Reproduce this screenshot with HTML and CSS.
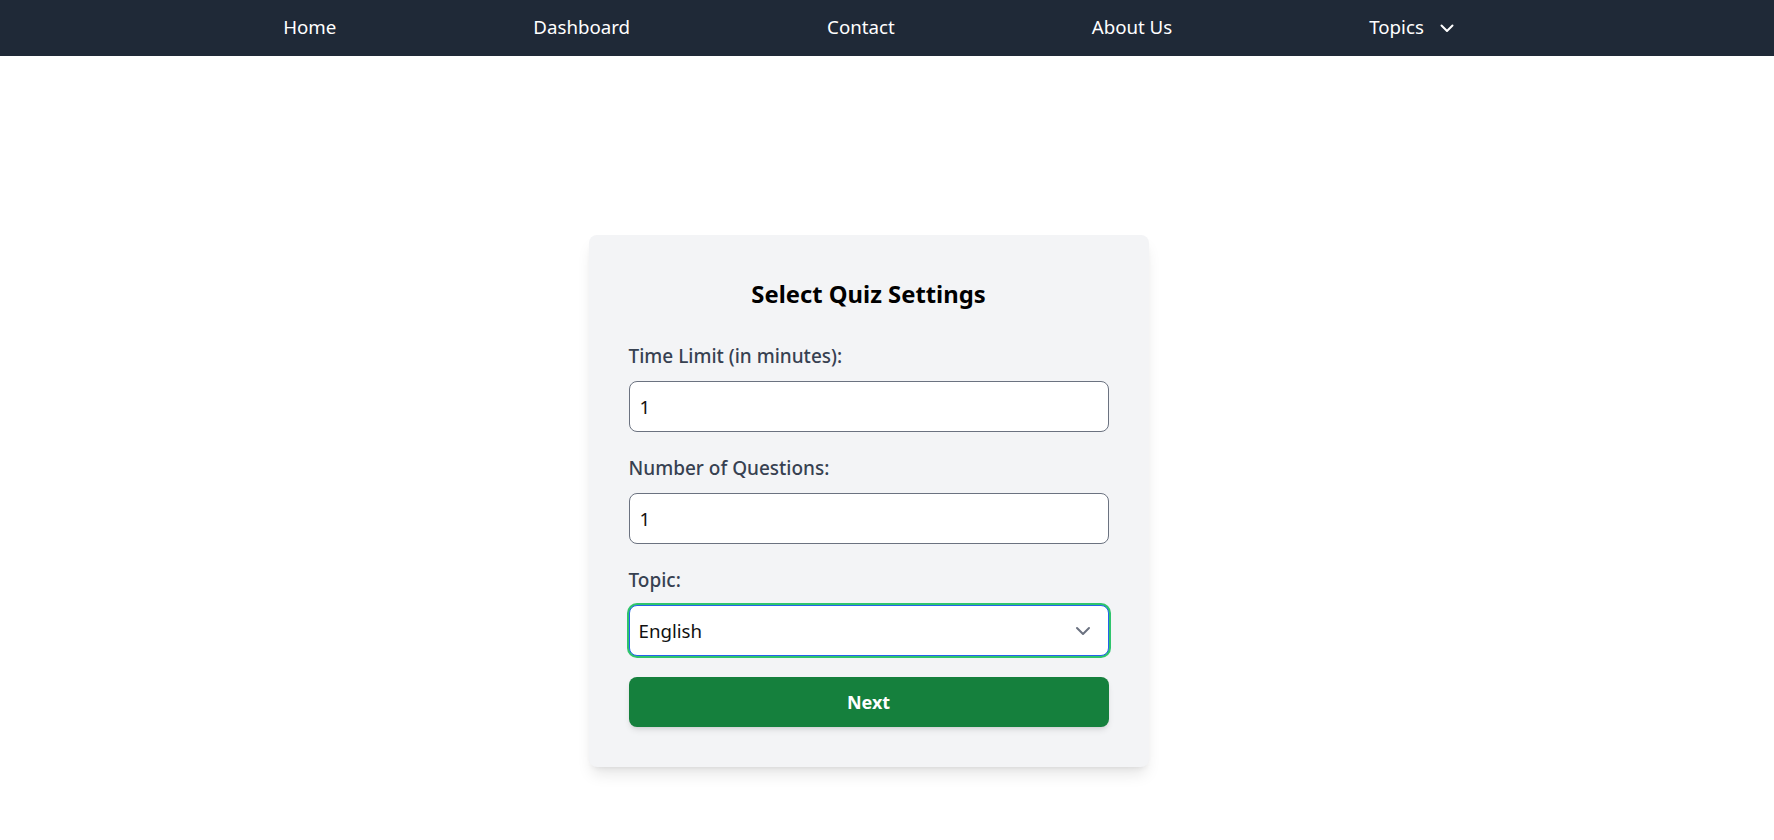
FILE: index.html
```html
<!DOCTYPE html>
<html lang="en">
<head>
<meta charset="utf-8">
<title>Select Quiz Settings</title>
<link rel="stylesheet" href="styles.css">
</head>
<body>
<nav class="topnav">
  <ul class="nav-list">
    <li><a href="#" class="nav-link">Home</a></li>
    <li><a href="#" class="nav-link">Dashboard</a></li>
    <li><a href="#" class="nav-link">Contact</a></li>
    <li><a href="#" class="nav-link">About Us</a></li>
    <li><a href="#" class="nav-link nav-drop">Topics
      <svg class="nav-chevron" width="14" height="9" viewBox="0 0 14 9" aria-hidden="true"><path d="M1.5 1.5 L7 7 L12.5 1.5" fill="none" stroke="#fff" stroke-width="2" stroke-linecap="round" stroke-linejoin="round"/></svg>
    </a></li>
  </ul>
</nav>
<main class="main">
  <form class="card">
    <h2 class="card-title">Select Quiz Settings</h2>
    <div class="field">
      <label class="field-label" for="time">Time Limit (in minutes):</label>
      <input class="field-input" id="time" type="text" value="1">
    </div>
    <div class="field">
      <label class="field-label" for="count">Number of Questions:</label>
      <input class="field-input" id="count" type="text" value="1">
    </div>
    <div class="field">
      <label class="field-label" for="topic">Topic:</label>
      <div class="select-wrap">
        <select class="field-input field-select" id="topic">
          <option>English</option>
        </select>
        <svg class="select-chevron" width="16" height="10" viewBox="0 0 16 10" aria-hidden="true"><path d="M2 2 L8 8 L14 2" fill="none" stroke="#6b7280" stroke-width="2" stroke-linecap="round" stroke-linejoin="round"/></svg>
      </div>
    </div>
    <button class="next-btn" type="button">Next</button>
  </form>
</main>
</body>
</html>
```

FILE: styles.css
```css
* { box-sizing: border-box; }

html, body {
  margin: 0;
  padding: 0;
  background: #ffffff;
  font-family: "Noto Sans", "Open Sans", Arial, sans-serif;
}

.topnav {
  background: #1f2937;
  height: 56px;
  padding-right: 37px;
}

.nav-list {
  list-style: none;
  margin: 0;
  padding: 0 0 2px;
  height: 56px;
  display: flex;
  align-items: center;
  justify-content: center;
  gap: 197px;
}

.nav-link {
  color: #ffffff;
  text-decoration: none;
  font-size: 18.7px;
  line-height: 24px;
  display: flex;
  align-items: center;
}

.nav-chevron {
  margin-left: 16px;
  margin-top: 3px;
}

.main {
  padding: 179px 37px 40px 0;
  display: flex;
  justify-content: center;
}

.card {
  width: 560px;
  background: #f3f4f6;
  border-radius: 8px;
  padding: 40px;
  box-shadow: 0 10px 15px -3px rgba(0,0,0,0.1), 0 4px 6px -4px rgba(0,0,0,0.1);
  display: flex;
  flex-direction: column;
}

.card-title {
  margin: 0 0 29px;
  text-align: center;
  font-size: 23.8px;
  line-height: 38px;
  font-weight: 700;
  color: #000000;
}

.field {
  display: flex;
  flex-direction: column;
  margin-bottom: 22px;
}

.field:last-of-type {
  margin-bottom: 21px;
}

.field-label {
  font-size: 19px;
  line-height: 28px;
  font-weight: 500;
  color: #374151;
  margin-bottom: 11px;
}

.field-input {
  height: 51px;
  width: 100%;
  border: 1px solid #6b7280;
  border-radius: 8px;
  background: #ffffff;
  padding: 0 10px;
  font-family: inherit;
  font-size: 18.7px;
  color: #111111;
  outline: none;
}

.select-wrap {
  position: relative;
}

.field-select {
  appearance: none;
  -webkit-appearance: none;
  padding-left: 9px;
  border: 1px solid #2563eb;
  box-shadow: 0 0 0 2px #2fc56c;
}

.select-chevron {
  position: absolute;
  right: 18px;
  top: 21px;
  pointer-events: none;
}

.next-btn {
  height: 50px;
  width: 100%;
  border: none;
  border-radius: 8px;
  background: #15803d;
  color: #ffffff;
  font-family: inherit;
  font-size: 18px;
  font-weight: 700;
  box-shadow: 0 4px 6px -1px rgba(0,0,0,0.1), 0 2px 4px -2px rgba(0,0,0,0.1);
  cursor: pointer;
}
```
